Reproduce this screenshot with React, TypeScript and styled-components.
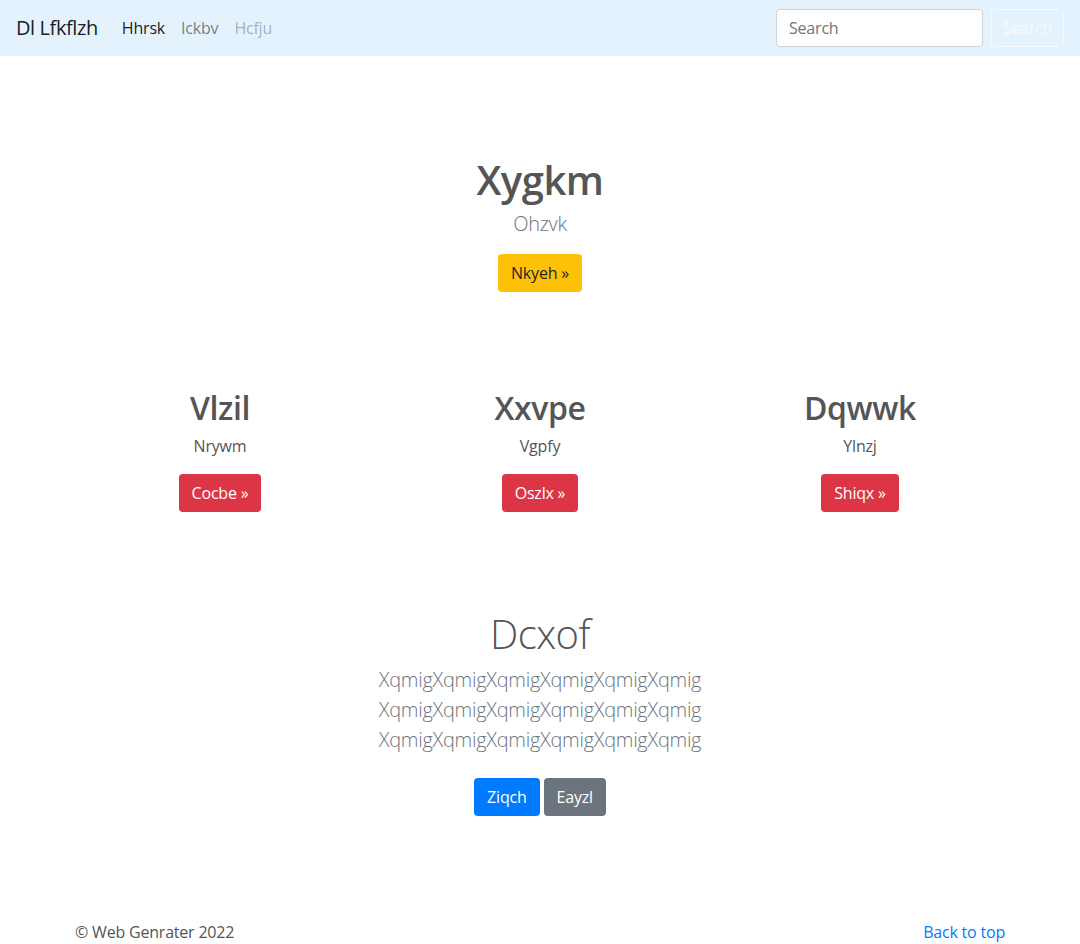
import React from "react";
import styled, { createGlobalStyle } from "styled-components";

const GlobalStyle = createGlobalStyle`
  html, body { margin: 0; padding: 0; background: #fff; }
  body {
    font-family: "Open Sans", "Noto Sans", Arial, sans-serif;
    font-size: 16px;
    line-height: 1.5;
    color: #555;
    letter-spacing: -0.2px;
  }
  * { box-sizing: border-box; }
`;

const Navbar = styled.nav`
  height: 56px;
  background: #e3f2fd;
  display: flex;
  align-items: center;
  padding: 0 16px;
`;

const Brand = styled.a`
  font-size: 20px;
  line-height: 30px;
  color: rgba(0, 0, 0, 0.9);
  margin-right: 16px;
  text-decoration: none;
  letter-spacing: -0.4px;
`;

const NavList = styled.div`
  display: flex;
  flex: 1;
`;

const NavLink = styled.a<{ $state: "active" | "normal" | "disabled" }>`
  padding: 8px;
  text-decoration: none;
  color: ${(p) =>
    p.$state === "active"
      ? "rgba(0,0,0,0.9)"
      : p.$state === "normal"
      ? "rgba(0,0,0,0.5)"
      : "rgba(0,0,0,0.3)"};
`;

const SearchForm = styled.form`
  display: flex;
  align-items: center;
`;

const SearchInput = styled.input`
  width: 207px;
  height: 38px;
  padding: 6px 12px;
  font: inherit;
  letter-spacing: inherit;
  color: #495057;
  border: 1px solid #ced4da;
  border-radius: 4px;
  margin-right: 8px;
  background: #fff;
  &::placeholder { color: #6c757d; }
`;

const OutlineButton = styled.button`
  width: 73px;
  height: 38px;
  padding: 6px 0;
  font: inherit;
  letter-spacing: inherit;
  color: #f8f9fa;
  background: transparent;
  border: 1px solid #f8f9fa;
  border-radius: 4px;
`;

const Section = styled.section<{ $top: number }>`
  padding-top: ${(p) => p.$top}px;
  text-align: center;
`;

const Title = styled.h1<{ $light?: boolean }>`
  margin: 0 0 ${(p) => (p.$light ? 7 : 5)}px;
  font-size: 40px;
  line-height: 48px;
  font-weight: ${(p) => (p.$light ? 300 : 600)};
  color: #555;
  letter-spacing: -0.5px;
`;

const Lead = styled.p<{ $mb: number }>`
  margin: 0 0 ${(p) => p.$mb}px;
  font-size: 20px;
  line-height: 30px;
  font-weight: 300;
  color: #6c757d;
  letter-spacing: -0.3px;
`;

const Button = styled.a<{ $variant: "warning" | "danger" | "primary" | "secondary" }>`
  display: inline-block;
  height: 38px;
  padding: 6px 12px;
  font-size: 16px;
  line-height: 24px;
  border-radius: 4px;
  border: 1px solid transparent;
  text-decoration: none;
  color: ${(p) => (p.$variant === "warning" ? "#212529" : "#fff")};
  background: ${(p) =>
    ({ warning: "#ffc107", danger: "#dc3545", primary: "#007bff", secondary: "#6c757d" }[
      p.$variant
    ])};
`;

const ButtonRow = styled.div`
  display: flex;
  justify-content: center;
  gap: 4px;
`;

const Container = styled.div`
  width: 960px;
  margin: 0 auto;
  padding: 0 15px;
`;

const Row = styled.div`
  display: grid;
  grid-template-columns: repeat(3, 1fr);
  margin: 0 -15px;
`;

const Col = styled.div`
  padding: 0 15px;
  text-align: center;
`;

const ColTitle = styled.h2`
  margin: 0 0 7px;
  font-size: 32px;
  line-height: 38px;
  font-weight: 600;
  color: #555;
  letter-spacing: -0.4px;
`;

const ColText = styled.p`
  margin: 0 0 16px;
  color: #555;
`;

const Footer = styled.footer`
  padding-top: 104px;
`;

const FooterInner = styled.div`
  display: flex;
  justify-content: space-between;
`;

const FooterText = styled.p`
  margin: 0;
  color: #555;
`;

const FooterLink = styled.a`
  color: #007bff;
  text-decoration: none;
`;

const cols = [
  { t: "Vlzil", p: "Nrywm", b: "Cocbe »" },
  { t: "Xxvpe", p: "Vgpfy", b: "Oszlx »" },
  { t: "Dqwwk", p: "Ylnzj", b: "Shiqx »" },
];

export default function App() {
  const line = "Xqmig".repeat(6);
  return (
    <>
      <GlobalStyle />
      <Navbar>
        <Brand href="#">Dl Lfkflzh</Brand>
        <NavList>
          <NavLink $state="active" href="#">Hhrsk</NavLink>
          <NavLink $state="normal" href="#">Ickbv</NavLink>
          <NavLink $state="disabled" href="#">Hcfju</NavLink>
        </NavList>
        <SearchForm onSubmit={(e) => e.preventDefault()}>
          <SearchInput placeholder="Search" />
          <OutlineButton type="submit">Search</OutlineButton>
        </SearchForm>
      </Navbar>

      <Section $top={100}>
        <Title>Xygkm</Title>
        <Lead $mb={15}>Ohzvk</Lead>
        <Button $variant="warning" href="#">Nkyeh »</Button>
      </Section>

      <Section $top={97}>
        <Container>
          <Row>
            {cols.map((c) => (
              <Col key={c.t}>
                <ColTitle>{c.t}</ColTitle>
                <ColText>{c.p}</ColText>
                <Button $variant="danger" href="#">{c.b}</Button>
              </Col>
            ))}
          </Row>
        </Container>
      </Section>

      <Section $top={98}>
        <Title $light>Dcxof</Title>
        <Lead $mb={23}>
          {line}
          <br />
          {line}
          <br />
          {line}
        </Lead>
        <ButtonRow>
          <Button $variant="primary" href="#">Ziqch</Button>
          <Button $variant="secondary" href="#">Eayzl</Button>
        </ButtonRow>
      </Section>

      <Footer>
        <Container>
          <FooterInner>
            <FooterText>© Web Genrater 2022</FooterText>
            <FooterLink href="#">Back to top</FooterLink>
          </FooterInner>
        </Container>
      </Footer>
    </>
  );
}
